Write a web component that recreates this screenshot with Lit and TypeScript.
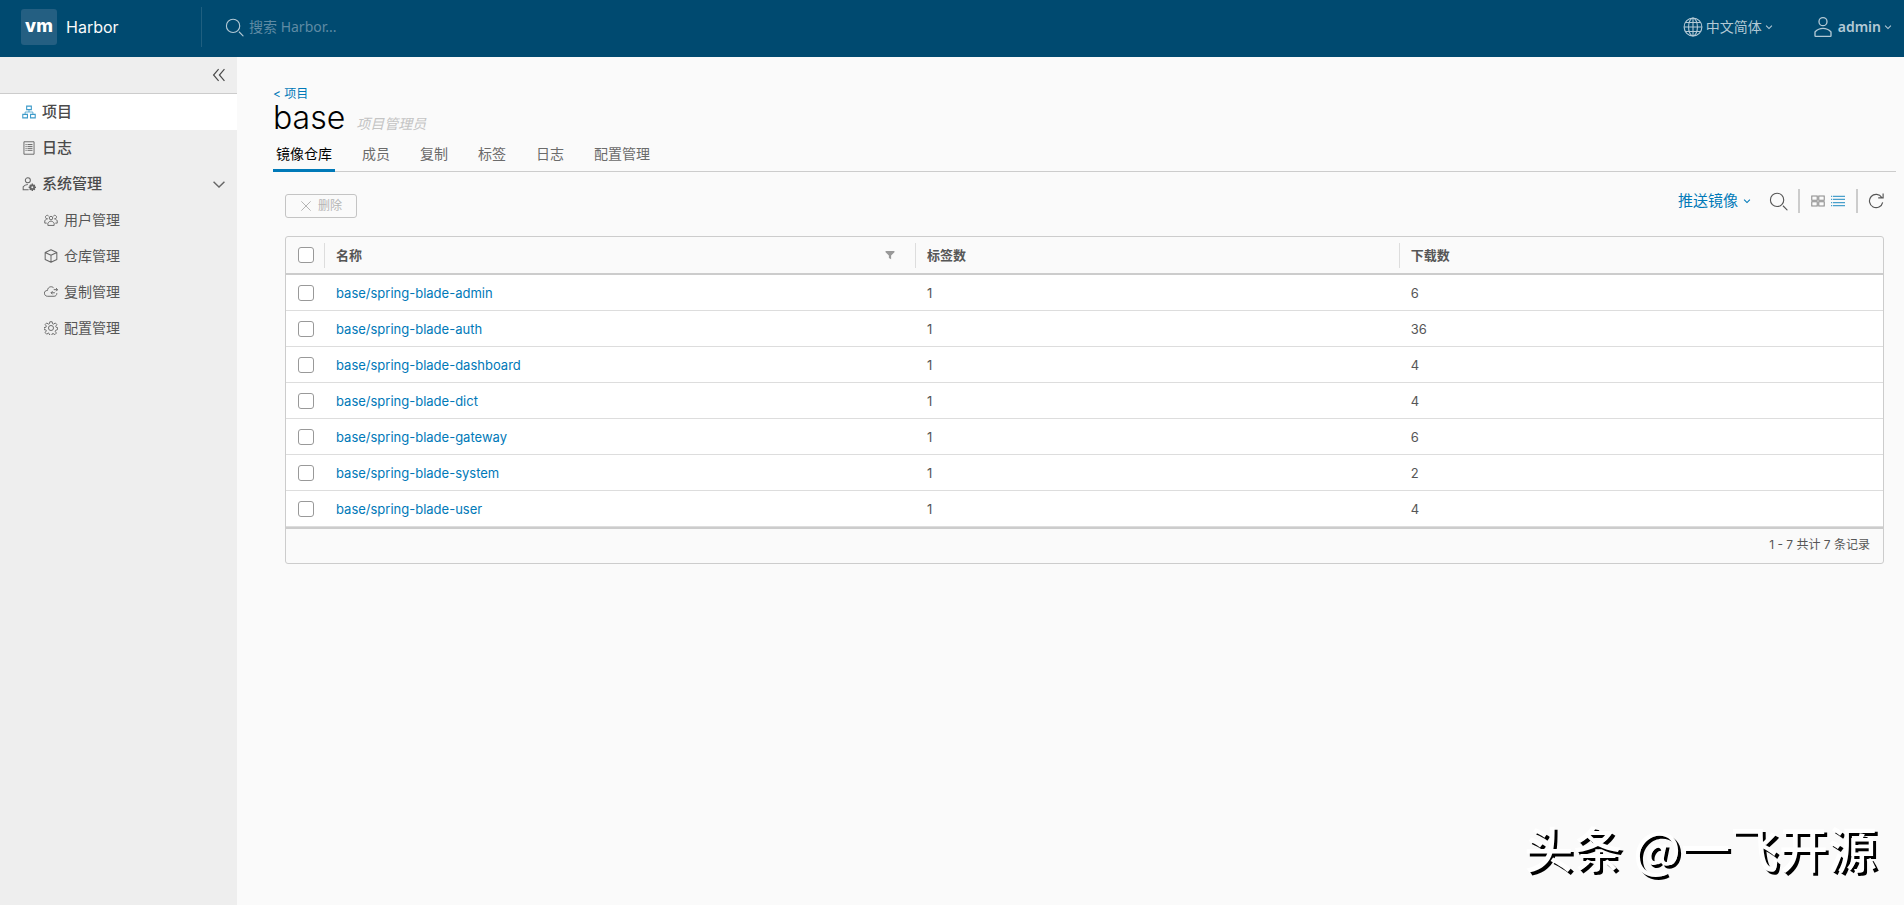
import { LitElement, html, svg, css, nothing, type SVGTemplateResult } from "lit";
import { customElement } from "lit/decorators.js";

const glyphs: Record<string, SVGTemplateResult> = {
  search: svg`<path d="M16.33,5.05A10.95,10.95,0,1,1,5.39,16,11,11,0,0,1,16.33,5.05m0-2.05a13,13,0,1,0,13,13,13,13,0,0,0-13-13Z"/><path d="M35,33.29l-7.37-7.42-1.42,1.41,7.37,7.42A1,1,0,1,0,35,33.29Z"/>`,
  user: svg`<path d="M18,17a7,7,0,1,0-7-7A7,7,0,0,0,18,17ZM18,5a5,5,0,1,1-5,5A5,5,0,0,1,18,5Z"/><path d="M30.47,24.37a17.16,17.16,0,0,0-24.93,0A2,2,0,0,0,5,25.74V31a2,2,0,0,0,2,2H29a2,2,0,0,0,2-2V25.74A2,2,0,0,0,30.47,24.37ZM29,31H7V25.73a15.17,15.17,0,0,1,22,0h0Z"/>`,
  globe: svg`<g fill="none" stroke="currentColor" stroke-width="2"><circle cx="18" cy="18" r="16"/><ellipse cx="18" cy="18" rx="8" ry="16"/><path d="M18 2v32M2 18h32M5 10h26M5 26h26"/></g>`,
  caret: svg`<path fill="none" stroke="currentColor" stroke-width="5" d="M5 12l13 13 13-13"/>`,
  chevron: svg`<path fill="none" stroke="currentColor" stroke-width="3.600" d="M4 12l14 14 14-14"/>`,
  collapse: svg`<path fill="none" stroke="currentColor" stroke-width="3" d="M17 3L4 18l13 15M32 3L19 18l13 15"/>`,
  close: svg`<path fill="none" stroke="currentColor" stroke-width="3" d="M4 4l28 28M32 4L4 32"/>`,
  projects: svg`<g fill="none" stroke="currentColor" stroke-width="2.800"><path d="M12 3h12v9H12zM2 24h12v9H2zM22 24h12v9H22z"/><path stroke-width="2" d="M18 12v6M8 24v-6h20v6"/></g>`,
  log: svg`<g fill="none" stroke="currentColor" stroke-width="2.400"><path d="M5 2h26v32H5z"/><path d="M9 9h3M9 14h3M9 19h3M9 24h3M14 9h13M14 14h13M14 19h13M14 24h13"/></g>`,
  admin: svg`<g fill="none" stroke="currentColor" stroke-width="2.600"><circle cx="15" cy="8.500" r="6.500"/><path d="M17 33H3v-8c3-4 7-6 12-6"/></g><path d="M25 17h3l1 3 3-1 2 2-1 3 3 1v3l-3 1 1 3-2 2-3-1-1 3h-3l-1-3-3 1-2-2 1-3-3-1v-3l3-1-1-3 2-2 3 1z"/><circle cx="26.500" cy="26.500" r="2.500" fill="#eee"/>`,
  users: svg`<g fill="none" stroke="currentColor" stroke-width="2.400"><circle cx="18" cy="13" r="4.500"/><path d="M10 32v-6c2-3 5-5 8-5s6 2 8 5v6z"/><path d="M12 8a4.500 4.500 0 1 0-3 7c-3 0-5 2-7 5v6h5M24 8a4.500 4.500 0 1 1 3 7c3 0 5 2 7 5v6h-5"/></g>`,
  cube: svg`<path fill="none" stroke="currentColor" stroke-width="2.600" stroke-linejoin="round" d="M18 2l15 7v18l-15 7-15-7V9zM3 9l15 7 15-7M18 16v18"/>`,
  cloud: svg`<path fill="none" stroke="currentColor" stroke-width="2.500" d="M25 8C22 3 13 3 10 10c-1 2-1 4-1 4-5 0-8 3-8 7s3 8 8 8h17c4 0 7-3 7-8M25 12h10M31 8l4 4-4 4M28 20H18M22 16l-4 4 4 4"/>`,
  gear: svg`<g fill="none" stroke="currentColor" stroke-width="2.400" stroke-linejoin="round"><circle cx="18" cy="18" r="6.500"/><path d="M15 2h6l1 5 3 1 4-3 4 4-3 5 1 2 4 1v5l-5 2-1 3 3 4-4 4-5-3-2 1-1 4h-5l-2-5-2-1-4 3-4-4 3-5-1-2-5-1v-5l5-1 1-3-3-4 4-4 4 3 3-1z"/></g>`,
  filter: svg`<path d="M2 4h32v4L22 20v13l-8-4V20L2 8z"/>`,
  cards: svg`<path fill="none" stroke="currentColor" stroke-width="2.600" d="M2 5h14v11H2zM20 5h14v11H20zM2 20h14v11H2zM20 20h14v11H20z"/>`,
  list: svg`<path fill="none" stroke="currentColor" stroke-width="3" d="M0 6h3M0 14h3M0 22h3M0 30h3M5 6h31M5 14h31M5 22h31M5 30h31"/>`,
  refresh: svg`<path fill="none" stroke="currentColor" stroke-width="2.600" d="M31 10A15 15 0 1 0 33 21M34 1v10H23"/>`,
};

const icon = (name: string, size = "s14") =>
  html`<svg class="icon ${size}" viewBox="0 0 36 36" aria-hidden="true">${glyphs[name]}</svg>`;

const tabs = ["镜像仓库", "成员", "复制", "标签", "日志", "配置管理"];
const adminLinks = [
  ["users", "用户管理"],
  ["cube", "仓库管理"],
  ["cloud", "复制管理"],
  ["gear", "配置管理"],
];
const repositories = [
  { name: "base/spring-blade-admin", tags: 1, pulls: 6 },
  { name: "base/spring-blade-auth", tags: 1, pulls: 36 },
  { name: "base/spring-blade-dashboard", tags: 1, pulls: 4 },
  { name: "base/spring-blade-dict", tags: 1, pulls: 4 },
  { name: "base/spring-blade-gateway", tags: 1, pulls: 6 },
  { name: "base/spring-blade-system", tags: 1, pulls: 2 },
  { name: "base/spring-blade-user", tags: 1, pulls: 4 },
];

@customElement("app-root")
export class AppRoot extends LitElement {
  static styles = css`
    :host {
      display: flex;
      flex-direction: column;
      min-height: 100vh;
      position: relative;
      background: #fafafa;
      color: #565656;
      font: 13px/24px Inter, "Noto Sans CJK SC", sans-serif;
    }
    * { box-sizing: border-box; }
    a { color: #0079b8; text-decoration: none; }
    button {
      display: flex;
      align-items: center;
      margin: 0;
      padding: 0;
      border: 0;
      background: none;
      color: inherit;
      font: inherit;
      cursor: pointer;
    }
    .icon { display: block; flex: none; fill: currentColor; }
    .s8 { width: 8px; height: 8px; }
    .s10 { width: 10px; height: 10px; }
    .s12 { width: 12px; height: 12px; }
    .s14 { width: 14px; height: 14px; }
    .s16 { width: 16px; height: 16px; }
    .s20 { width: 20px; height: 20px; }
    .s24 { width: 24px; height: 24px; }

    .header {
      display: flex;
      align-items: center;
      height: 57px;
      padding: 0 12px 3px 21px;
      background: #004a70;
      color: #b3c9d5;
    }
    .brand {
      display: flex;
      align-items: center;
      gap: 9px;
      width: 180px;
      color: #fafafa;
      font-size: 16px;
    }
    .logo {
      width: 36px;
      height: 36px;
      border-radius: 3px;
      background: #245f82;
      color: #fff;
      font-size: 18px;
      font-weight: 800;
      line-height: 34px;
      text-align: center;
    }
    .search {
      display: flex;
      flex: 1;
      align-items: center;
      gap: 3px;
      height: 40px;
      padding-left: 22px;
      border-left: 1px solid #1f5f80;
    }
    .search input {
      flex: 1;
      border: 0;
      outline: 0;
      background: none;
      color: #fff;
      font: 14px/24px "Noto Sans", "Noto Sans CJK SC", sans-serif;
    }
    .search input::placeholder { color: #5f8ba4; opacity: 1; }
    .menus { display: flex; gap: 38px; font: 14px/24px "Noto Sans", "Noto Sans CJK SC", sans-serif; }
    .menus button { gap: 3px; }
    .account { font-weight: 600; }

    .body { display: flex; flex: 1; }
    .sidebar { width: 237px; flex: none; background: #eee; color: #4a4a4a; }
    .toggle {
      display: flex;
      justify-content: flex-end;
      align-items: center;
      height: 37px;
      padding-right: 11px;
      border-bottom: 1px solid #ccc;
    }
    .item {
      display: flex;
      align-items: center;
      gap: 6px;
      width: 100%;
      height: 36px;
      padding: 0 11px 0 22px;
      color: #4a4a4a;
      font-size: 15px;
      font-weight: 500;
    }
    .item .icon { color: #666; }
    .item .label { flex: 1; text-align: left; }
    .item.active { background: #fff; }
    .item.active .icon { color: #3d9bca; }
    .item.child { padding-left: 44px; font-size: 14px; font-weight: 400; color: #565656; }

    .content { flex: 1; min-width: 0; padding: 25px 8px 24px 36px; }
    .crumb { display: block; width: max-content; font-size: 12px; line-height: 24px; }
    .title { display: flex; align-items: baseline; gap: 11px; }
    h1 { margin: 0; color: #000; font-size: 32px; font-weight: 300; line-height: 24px; }
    .role { color: #c4c4c4; font-size: 14px; font-style: italic; line-height: 24px; }
    .tabs { display: flex; gap: 24px; height: 36px; margin-bottom: 17px; border-bottom: 1px solid #ccc; }
    .tab { height: 36px; padding: 3px 3px 0; border-bottom: 3px solid transparent; color: #6b6b6b; font-size: 14px; }
    .tab.active { border-color: #0079b8; color: #000; }

    .panel { padding: 0 12px; }
    .toolbar { display: flex; justify-content: space-between; height: 47px; }
    .remove {
      gap: 6px;
      height: 24px;
      margin-top: 5px;
      padding: 0 14px;
      border: 1px solid #c4c4c4;
      border-radius: 3px;
      color: #b5b5b5;
      font-size: 12px;
      line-height: 22px;
    }
    .tools { display: flex; align-items: center; height: 24px; }
    .push { gap: 5px; margin-right: 17px; color: #0079b8; font-size: 15px; }
    .view { display: flex; gap: 6px; height: 24px; margin: 0 10px; padding: 0 11px; border: solid #ccc; border-width: 0 2px; }
    .view .on { color: #49a0cc; }
    .view button:not(.on) { color: #888; }

    .grid { border: 1px solid #ccc; border-radius: 3px; overflow: hidden; background: #fafafa; }
    table { width: 100%; border-collapse: separate; border-spacing: 0; table-layout: fixed; }
    .c-check { width: 38px; }
    .c-name { width: 37%; }
    .c-tags { width: 30.3%; }
    th { height: 38px; padding: 0; border-bottom: 2px solid #ccc; text-align: left; font-weight: 600; }
    .head { display: flex; align-items: center; justify-content: space-between; height: 25px; padding: 0 20px 0 11px; border-left: 1px solid #ddd; }
    .head button { color: #999; }
    td { height: 36px; padding: 0 12px; border-bottom: 1px solid #ddd; background: #fff; }
    th.pick, td.pick { padding: 0 0 0 12px; }
    .pick input {
      appearance: none;
      display: block;
      width: 16px;
      height: 16px;
      margin: 0;
      border: 1px solid #999;
      border-radius: 3px;
      background: #fff;
    }
    .foot { height: 36px; padding: 4px 13px 0; border-top: 2px solid #ccc; font-size: 12px; text-align: right; }

    .watermark {
      position: absolute;
      right: 27px;
      bottom: 34px;
      color: #fff;
      font: 500 49px/48px "Noto Sans CJK SC", sans-serif;
      text-shadow: 3px 3px 0 #000;
      pointer-events: none;
    }
  `;

  render() {
    return html`
      <header class="header">
        <div class="brand"><span class="logo">vm</span><span>Harbor</span></div>
        <label class="search">
          ${icon("search", "s20")}
          <input type="text" placeholder="搜索 Harbor..." aria-label="搜索 Harbor" />
        </label>
        <div class="menus">
          <button aria-haspopup="menu">${icon("globe", "s20")}<span>中文简体</span>${icon("caret", "s8")}</button>
          <button class="account" aria-haspopup="menu">${icon("user", "s24")}<span>admin</span>${icon("caret", "s8")}</button>
        </div>
      </header>
      <div class="body">
        <nav class="sidebar">
          <div class="toggle"><button aria-label="收起">${icon("collapse")}</button></div>
          <a class="item active" href="#projects">${icon("projects")}<span class="label">项目</span></a>
          <a class="item" href="#logs">${icon("log")}<span class="label">日志</span></a>
          <button class="item" aria-expanded="true">
            ${icon("admin")}<span class="label">系统管理</span>${icon("chevron")}
          </button>
          ${adminLinks.map(([glyph, label]) => html`<a class="item child" href="#${glyph}">${icon(glyph)}<span class="label">${label}</span></a>`)}
        </nav>
        <main class="content">
          <a class="crumb" href="#projects">&lt; 项目</a>
          <div class="title"><h1>base</h1><span class="role">项目管理员</span></div>
          <div class="tabs" role="tablist">
            ${tabs.map((tab, i) => html`<button class="tab ${i === 0 ? "active" : ""}" role="tab" aria-selected=${i === 0}>${tab}</button>`)}
          </div>
          <section class="panel">
            <div class="toolbar">
              <button class="remove" disabled>${icon("close", "s12")}<span>删除</span></button>
              <div class="tools">
                <button class="push" aria-haspopup="menu"><span>推送镜像</span>${icon("caret", "s8")}</button>
                <button aria-label="搜索">${icon("search", "s20")}</button>
                <div class="view">
                  <button aria-label="卡片">${icon("cards")}</button>
                  <button class="on" aria-label="列表">${icon("list")}</button>
                </div>
                <button aria-label="刷新">${icon("refresh", "s16")}</button>
              </div>
            </div>
            <div class="grid">
              <table>
                <colgroup><col class="c-check" /><col class="c-name" /><col class="c-tags" /><col /></colgroup>
                <thead>
                  <tr>
                    <th class="pick"><input type="checkbox" aria-label="全选" /></th>
                    ${["名称", "标签数", "下载数"].map(
                      (label, i) => html`<th>
                        <div class="head"><span>${label}</span>${i === 0 ? html`<button aria-label="过滤">${icon("filter", "s10")}</button>` : nothing}</div>
                      </th>`,
                    )}
                  </tr>
                </thead>
                <tbody>
                  ${repositories.map(
                    (repo) => html`<tr>
                      <td class="pick"><input type="checkbox" aria-label=${repo.name} /></td>
                      <td><a href="#${repo.name}">${repo.name}</a></td>
                      <td>${repo.tags}</td>
                      <td>${repo.pulls}</td>
                    </tr>`,
                  )}
                </tbody>
              </table>
              <div class="foot">1 - 7 共计 7 条记录</div>
            </div>
          </section>
        </main>
      </div>
      <div class="watermark">头条 @一飞开源</div>
    `;
  }
}
